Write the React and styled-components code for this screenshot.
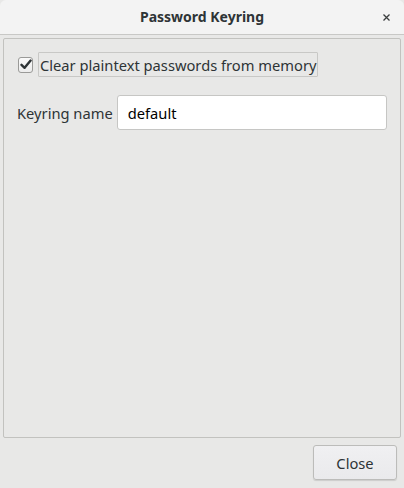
import styled, { createGlobalStyle } from "styled-components";

const GlobalStyle = createGlobalStyle`
    html, body {
        margin: 0;
        padding: 0;
        background: #e8e8e7;
    }
    * {
        box-sizing: border-box;
    }
`;

const App = () => {
    return (
        <Window>
            <GlobalStyle />
            <TitleBar>
                <Title>Password Keyring</Title>
                <CloseX>
                    <svg width="7" height="7" viewBox="0 0 7 7">
                        <path d="M0.5 0.5 L6.5 6.5 M6.5 0.5 L0.5 6.5" stroke="#3a3d3e" strokeWidth="1.3" />
                    </svg>
                </CloseX>
            </TitleBar>
            <Body>
                <Frame>
                    <CheckRow>
                        <CheckBox>
                            <svg width="12" height="11" viewBox="0 0 12 11">
                                <path d="M1.5 5.8 L4.6 8.8 L10.6 1.6" fill="none" stroke="#2e3436" strokeWidth="2.4" strokeLinecap="round" strokeLinejoin="round" />
                            </svg>
                        </CheckBox>
                        <CheckLabel>Clear plaintext passwords from memory</CheckLabel>
                    </CheckRow>
                    <FieldRow>
                        <FieldLabel>Keyring name</FieldLabel>
                        <TextInput defaultValue="default" />
                    </FieldRow>
                </Frame>
                <ButtonRow>
                    <Button>Close</Button>
                </ButtonRow>
            </Body>
        </Window>
    );
};

export default App;

const Window = styled.div`
    width: 404px;
    height: 488px;
    display: flex;
    flex-direction: column;
    background: #e8e8e7;
    font-family: "Noto Sans", "DejaVu Sans", sans-serif;
    color: #2e3436;
    overflow: hidden;
`;

const TitleBar = styled.div`
    position: relative;
    height: 35px;
    flex: none;
    display: flex;
    align-items: center;
    justify-content: center;
    background: #f3f3f3;
    border-bottom: 1px solid #c8c8c6;
    border-radius: 6px 6px 0 0;
`;

const Title = styled.div`
    font-size: 14px;
    font-weight: bold;
    color: #2e3436;
    margin-top: -1px;
`;

const CloseX = styled.div`
    position: absolute;
    left: 383px;
    top: 14px;
    width: 7px;
    height: 7px;
    display: flex;
`;

const Body = styled.div`
    flex: 1;
    display: flex;
    flex-direction: column;
    padding: 3px 3px 0 3px;
`;

const Frame = styled.div`
    height: 400px;
    border: 1px solid #c2c2bf;
    border-radius: 2px;
    padding: 13px 13px 0 14px;
    display: flex;
    flex-direction: column;
    gap: 18px;
`;

const CheckRow = styled.div`
    display: flex;
    align-items: center;
    gap: 5px;
`;

const CheckBox = styled.div`
    width: 15px;
    height: 16px;
    border: 1px solid #9a9a98;
    border-radius: 3px;
    background: linear-gradient(#fafafa, #ececec);
    display: flex;
    align-items: center;
    justify-content: center;
`;

const CheckLabel = styled.div`
    height: 25px;
    padding: 0 1px;
    border: 1px solid #c8c8c6;
    border-radius: 1px;
    display: flex;
    align-items: center;
    font-size: 14.7px;
    color: #2e3436;
`;

const FieldRow = styled.div`
    display: flex;
    align-items: center;
    gap: 4px;
`;

const FieldLabel = styled.div`
    font-size: 14.7px;
    color: #2e3436;
    margin-left: -1px;
`;

const TextInput = styled.input`
    flex: 1;
    height: 35px;
    border: 1px solid #c6c6c4;
    border-radius: 3px;
    background: #ffffff;
    padding: 0 10px;
    font-family: "Noto Sans", "DejaVu Sans", sans-serif;
    font-size: 14.7px;
    color: #000000;
    outline: none;
`;

const ButtonRow = styled.div`
    display: flex;
    justify-content: flex-end;
    padding: 7px 4px 0 0;
`;

const Button = styled.button`
    width: 84px;
    height: 35px;
    border: 1px solid #bcbcba;
    border-radius: 3px;
    background: linear-gradient(#f0f0f2, #eaeaec);
    box-shadow: 0 1px 1px rgba(0, 0, 0, 0.12);
    font-family: "Noto Sans", "DejaVu Sans", sans-serif;
    font-size: 14.7px;
    color: #2e3436;
`;
